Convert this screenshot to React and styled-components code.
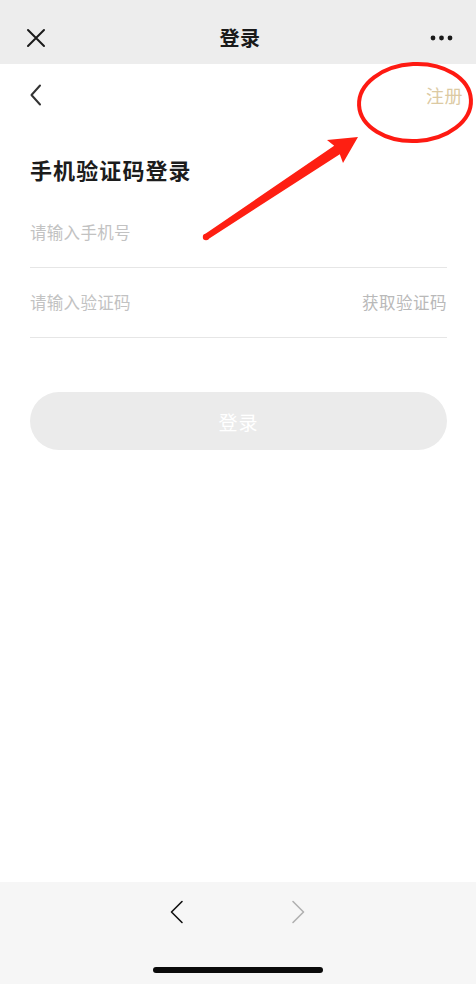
import React from "react";
import styled, { createGlobalStyle } from "styled-components";

const Global = createGlobalStyle`
  html, body { margin: 0; padding: 0; background: #ffffff; }
  body { font-family: "Noto Sans CJK SC", "Noto Sans", sans-serif; -webkit-font-smoothing: antialiased; }
  * { box-sizing: border-box; }
`;

const Page = styled.div`
  position: relative;
  width: 476px;
  height: 984px;
  display: flex;
  flex-direction: column;
  background: #ffffff;
  overflow: hidden;
`;

const TopBar = styled.header`
  height: 64px;
  flex: none;
  background: #ededed;
  display: grid;
  grid-template-columns: 80px 1fr 80px;
  align-items: center;
  padding: 12px 22px 0 26px;
`;

const TopTitle = styled.div`
  text-align: center;
  font-size: 20px;
  font-weight: 600;
  color: #1a1a1a;
  line-height: 28px;
  letter-spacing: 0.5px;
`;

const IconSlot = styled.div`
  display: flex;
  align-items: center;
  justify-content: ${(p) => (p.$end ? "flex-end" : "flex-start")};
`;

const Content = styled.main`
  flex: 1;
  display: flex;
  flex-direction: column;
  padding: 0 29px 0 30px;
`;

const NavRow = styled.div`
  margin-top: 16px;
  height: 30px;
  display: flex;
  align-items: center;
  justify-content: space-between;
  margin-right: -16px;
`;

const RegisterLink = styled.span`
  font-size: 18px;
  color: #dccaa3;
  line-height: 30px;
  letter-spacing: 0.5px;
`;

const Heading = styled.h1`
  margin: 44px 0 0;
  font-size: 22px;
  line-height: 30px;
  font-weight: 700;
  color: #1c1c1c;
  letter-spacing: 1.1px;
`;

const Fields = styled.div`
  margin-top: 14px;
  display: flex;
  flex-direction: column;
`;

const FieldRow = styled.div`
  height: 70px;
  display: flex;
  align-items: center;
  border-bottom: 1px solid #e6e6e6;
  padding-bottom: 1px;
`;

const FieldInput = styled.input`
  flex: 1;
  min-width: 0;
  border: none;
  outline: none;
  background: transparent;
  padding: 0;
  font-family: inherit;
  font-size: 16.5px;
  letter-spacing: 0.3px;
  color: #333;
  &::placeholder { color: #c2c2c2; }
`;

const CodeLink = styled.span`
  font-size: 16.5px;
  letter-spacing: 0.5px;
  color: #b9b9b9;
`;

const SubmitButton = styled.button`
  margin-top: 54px;
  height: 58px;
  width: 100%;
  border: none;
  border-radius: 29px;
  background: #ebebeb;
  color: #ffffff;
  font-family: inherit;
  font-size: 19px;
  letter-spacing: 1px;
`;

const BottomBar = styled.footer`
  height: 102px;
  flex: none;
  background: #f6f6f6;
  display: flex;
  flex-direction: column;
  align-items: center;
`;

const NavButtons = styled.div`
  height: 60px;
  display: flex;
  align-items: center;
  gap: 107px;
  padding-right: 2px;
`;

const HomeIndicator = styled.div`
  margin-top: 25px;
  width: 170px;
  height: 6px;
  border-radius: 3px;
  background: #0a0a0a;
`;

const Overlay = styled.svg`
  position: absolute;
  left: 0;
  top: 0;
  pointer-events: none;
`;

export default function App() {
  return (
    <>
      <Global />
      <Page>
        <TopBar>
          <IconSlot>
            <svg width="20" height="20" viewBox="0 0 20 20">
              <path d="M2 2 L18 18 M18 2 L2 18" stroke="#1a1a1a" strokeWidth="2" strokeLinecap="round" />
            </svg>
          </IconSlot>
          <TopTitle>登录</TopTitle>
          <IconSlot $end>
            <svg width="24" height="8" viewBox="0 0 24 8">
              <circle cx="3" cy="4" r="2.4" fill="#1a1a1a" />
              <circle cx="11.5" cy="4" r="2.4" fill="#1a1a1a" />
              <circle cx="20" cy="4" r="2.4" fill="#1a1a1a" />
            </svg>
          </IconSlot>
        </TopBar>
        <Content>
          <NavRow>
            <svg width="12" height="22" viewBox="0 0 12 22">
              <path d="M10 1.5 L1.5 11 L10 20.5" fill="none" stroke="#333" strokeWidth="2" strokeLinecap="round" strokeLinejoin="round" />
            </svg>
            <RegisterLink>注册</RegisterLink>
          </NavRow>
          <Heading>手机验证码登录</Heading>
          <Fields>
            <FieldRow>
              <FieldInput placeholder="请输入手机号" />
            </FieldRow>
            <FieldRow>
              <FieldInput placeholder="请输入验证码" />
              <CodeLink>获取验证码</CodeLink>
            </FieldRow>
          </Fields>
          <SubmitButton>登录</SubmitButton>
        </Content>
        <BottomBar>
          <NavButtons>
            <svg width="14" height="24" viewBox="0 0 14 24">
              <path d="M12 1.5 L1.5 12 L12 22.5" fill="none" stroke="#111" strokeWidth="1.6" strokeLinecap="round" strokeLinejoin="round" />
            </svg>
            <svg width="14" height="24" viewBox="0 0 14 24">
              <path d="M2 1.5 L12.5 12 L2 22.5" fill="none" stroke="#b0b0b0" strokeWidth="1.6" strokeLinecap="round" strokeLinejoin="round" />
            </svg>
          </NavButtons>
          <HomeIndicator />
        </BottomBar>
        <Overlay width="476" height="984" viewBox="0 0 476 984">
          <ellipse cx="415" cy="102.5" rx="56" ry="38.5" fill="none" stroke="#fe1a12" strokeWidth="4" transform="rotate(-3 415 102.5)" />
          <polygon
            points="204.3,234.5 334.2,145.8 327,140 358,137 343,163 339.8,154.2 207.7,239.5"
            fill="#fe1f12"
          />
          <circle cx="206" cy="237" r="3.2" fill="#fe1f12" />
        </Overlay>
      </Page>
    </>
  );
}
